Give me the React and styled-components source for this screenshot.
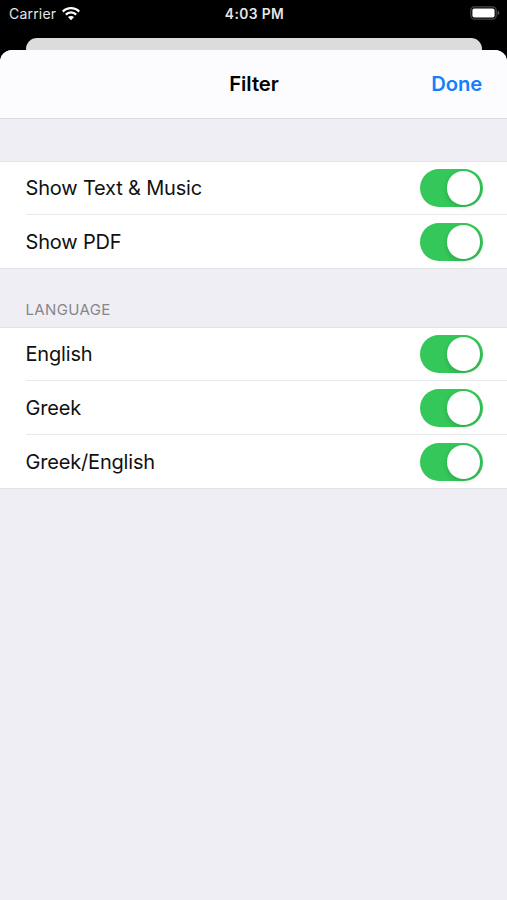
import { useState } from "react";
import styled, { createGlobalStyle } from "styled-components";

const GlobalStyle = createGlobalStyle`
	* {
		box-sizing: border-box;
	}
	body {
		margin: 0;
		background-color: #000;
		font-family: Inter, "Liberation Sans", sans-serif;
	}
`;

const StyledScreen = styled.div`
	display: flex;
	flex-direction: column;
	height: 900px;
	overflow: hidden;
	background-color: #000;
`;

const StyledStatusBar = styled.div`
	display: grid;
	grid-template-columns: 1fr auto 1fr;
	align-items: center;
	height: 27px;
	margin-bottom: 11px;
	padding: 0 7px 0 9px;
	color: #e6e6e6;
	font-size: 14px;
`;

const StyledCarrier = styled.div`
	display: flex;
	align-items: center;
	gap: 6px;
	letter-spacing: 0.2px;
`;

const StyledTime = styled.span`
	font-size: 13.8px;
	font-weight: 600;
	letter-spacing: 0.4px;
`;

const StyledBattery = styled.svg`
	justify-self: end;
	margin-top: -1px;
`;

const StyledBackCard = styled.div`
	flex: none;
	height: 12px;
	margin: 0 25px 0 26px;
	border-radius: 11px 11px 0 0;
	background-color: #dcdcdd;
`;

const StyledSheet = styled.div`
	flex: 1;
	border-radius: 12px 12px 0 0;
	background-color: #efeef4;
	overflow: hidden;
`;

const StyledHeader = styled.header`
	display: grid;
	grid-template-columns: 1fr auto 1fr;
	align-items: center;
	height: 69px;
	padding: 0 25px 1px;
	border-bottom: 1px solid #dddde0;
	background-color: #fcfcfe;
`;

const StyledTitle = styled.h1`
	grid-column: 2;
	margin: 0;
	padding-left: 1px;
	font-size: 20.3px;
	font-weight: 600;
	letter-spacing: -0.05px;
	color: #000;
`;

const StyledDone = styled.button`
	justify-self: end;
	padding: 0;
	border: none;
	background: none;
	font-family: inherit;
	font-size: 20.2px;
	font-weight: 600;
	letter-spacing: -0.1px;
	color: #147efb;
`;

const StyledCaption = styled.div`
	display: flex;
	align-items: flex-end;
	height: ${(props) => props.$height}px;
	padding: 0 25.5px 8px;
	font-size: 15px;
	line-height: 19px;
	letter-spacing: 0.35px;
	color: #86868b;
`;

const StyledGroup = styled.div`
	border-top: 1px solid #e4e4e8;
	border-bottom: 1px solid #e4e4e8;
	background-color: #fff;
`;

const StyledRow = styled.div`
	display: flex;
	align-items: center;
	justify-content: space-between;
	height: 52px;
	margin-left: 25.5px;
	padding-right: 24.5px;
	& + & {
		height: 54px;
		padding-top: 1px;
		border-top: 1px solid #e9e9eb;
	}
`;

const StyledLabel = styled.span`
	font-size: 20px;
	line-height: 26px;
	letter-spacing: -0.18px;
	color: #111;
`;

const StyledSwitch = styled.button`
	display: flex;
	align-items: center;
	justify-content: ${(props) => (props.$on ? "flex-end" : "flex-start")};
	width: 62.5px;
	height: 38px;
	padding: 2.3px;
	border: none;
	border-radius: 19px;
	background-color: ${(props) => (props.$on ? "#34c759" : "#e9e9eb")};
`;

const StyledKnob = styled.span`
	width: 33.4px;
	height: 33.4px;
	border-radius: 50%;
	background-color: #fff;
	box-shadow: 0 2px 5px rgba(0, 0, 0, 0.16);
`;

const groups = [
	{ caption: "", height: 42, rows: ["Show Text & Music", "Show PDF"] },
	{
		caption: "LANGUAGE",
		height: 58,
		rows: ["English", "Greek", "Greek/English"],
	},
];

function Wifi() {
	return (
		<svg width="18" height="14" viewBox="0 0 18 14" fill="none">
			<path
				d="M0.8 4.6C5.3 0 12.7 0 17.2 4.6M3.8 7.6C6.7 4.7 11.3 4.7 14.2 7.6"
				stroke="#fff"
				strokeWidth="2.3"
			/>
			<path d="M9 13.2 5.9 10.1C7.6 8.5 10.4 8.5 12.1 10.1Z" fill="#fff" />
		</svg>
	);
}

function Battery() {
	return (
		<StyledBattery width="30" height="14" viewBox="0 0 30 14">
			<rect
				x="0.8"
				y="0.8"
				width="25.4"
				height="12.4"
				rx="3.6"
				fill="none"
				stroke="#48484a"
				strokeWidth="1.2"
			/>
			<rect x="2.4" y="2.4" width="22.2" height="9.2" rx="2" fill="#fff" />
			<path d="M27.6 4.8C29.8 5.4 29.8 8.6 27.6 9.2Z" fill="#5c5c5e" />
		</StyledBattery>
	);
}

function FilterRow({ label }) {
	const [on, setOn] = useState(true);
	return (
		<StyledRow>
			<StyledLabel>{label}</StyledLabel>
			<StyledSwitch
				role="switch"
				aria-checked={on}
				aria-label={label}
				$on={on}
				onClick={() => setOn(!on)}
			>
				<StyledKnob />
			</StyledSwitch>
		</StyledRow>
	);
}

function App() {
	return (
		<StyledScreen>
			<GlobalStyle />
			<StyledStatusBar>
				<StyledCarrier>
					Carrier
					<Wifi />
				</StyledCarrier>
				<StyledTime>4:03 PM</StyledTime>
				<Battery />
			</StyledStatusBar>
			<StyledBackCard />
			<StyledSheet>
				<StyledHeader>
					<StyledTitle>Filter</StyledTitle>
					<StyledDone>Done</StyledDone>
				</StyledHeader>
				{groups.map((group) => (
					<section key={group.caption}>
						<StyledCaption $height={group.height}>{group.caption}</StyledCaption>
						<StyledGroup>
							{group.rows.map((label) => (
								<FilterRow key={label} label={label} />
							))}
						</StyledGroup>
					</section>
				))}
			</StyledSheet>
		</StyledScreen>
	);
}

export default App;
